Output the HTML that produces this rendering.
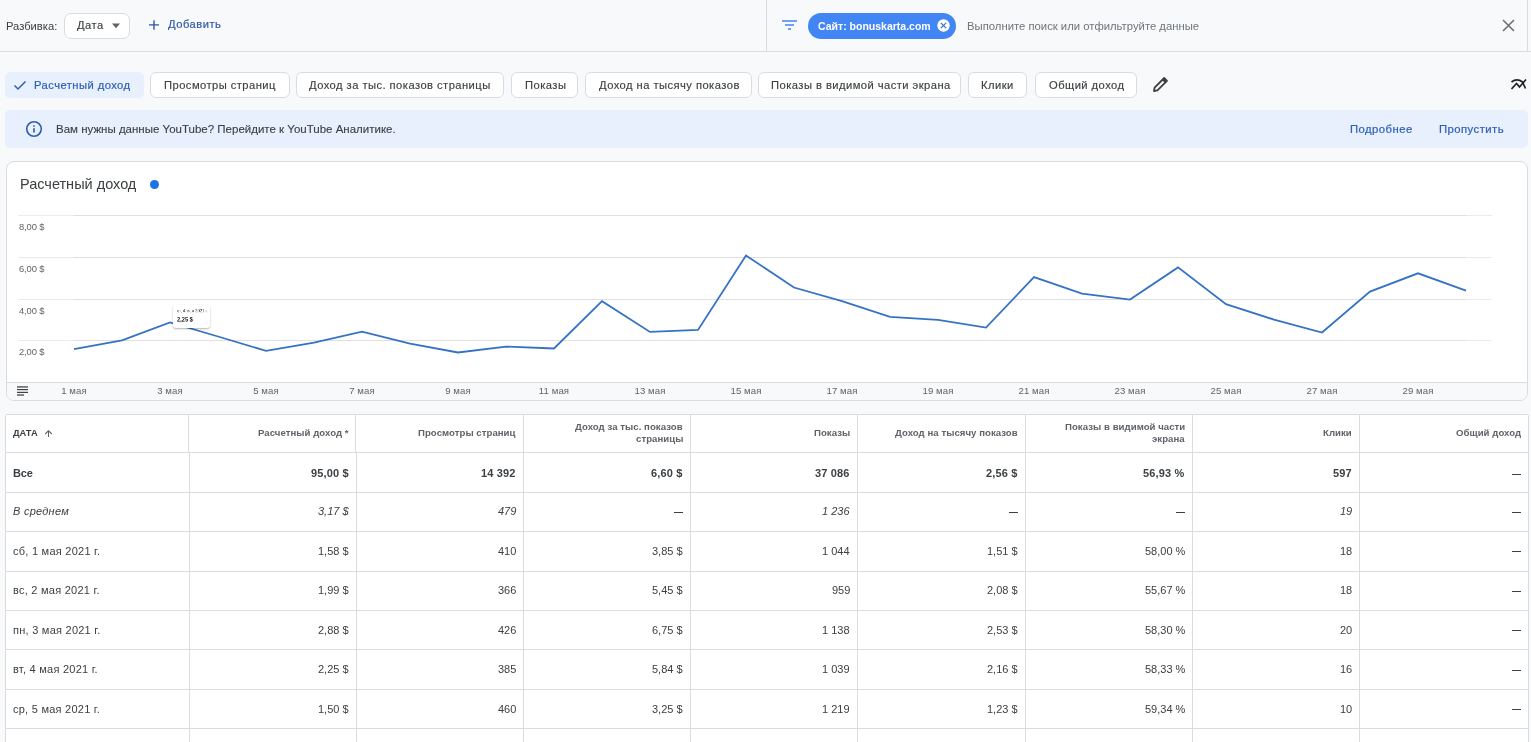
<!DOCTYPE html>
<html><head><meta charset="utf-8"><style>
html,body{margin:0;padding:0;}
body{width:1531px;height:742px;overflow:hidden;background:#f8f9fa;position:relative;font-family:"Liberation Sans", sans-serif;}
.t{position:absolute;line-height:1;white-space:nowrap;will-change:transform;}
.r{position:absolute;}
svg.r{overflow:visible;}
</style></head><body>
<div class="r" style="left:0.00px;top:51.00px;width:1531.00px;height:1.00px;background:#dadce0"></div>
<div class="r" style="left:766.00px;top:0.00px;width:1.00px;height:51.00px;background:#dadce0"></div>
<div class="r" style="left:1527.00px;top:0.00px;width:1.00px;height:51.00px;background:#dadce0"></div>
<div class="t" style="top:20.82px;font-size:11.2px;font-weight:400;color:#3c4043;left:6.00px;">Разбивка:</div>
<div class="r" style="left:64.00px;top:13.00px;width:66.00px;height:26.00px;background:#fff;border:1px solid #dadce0;border-radius:7px;box-sizing:border-box"></div>
<div class="t" style="top:20.12px;font-size:11.2px;font-weight:400;color:#3c4043;letter-spacing:0.45px;-webkit-text-stroke:0.15px #3c4043;left:77.00px;">Дата</div>
<svg class="r" style="left:111px;top:23px" width="10" height="6" viewBox="0 0 10 6"><path d="M1 0.5 L9 0.5 L5 5.2 Z" fill="#5f6368"/></svg>
<svg class="r" style="left:148px;top:19px" width="12" height="12" viewBox="0 0 12 12"><path d="M6 1.2 V10.8 M1 5.9 H11" stroke="#2f55a8" stroke-width="1.4"/></svg>
<div class="t" style="top:19.22px;font-size:11.2px;font-weight:400;color:#3159aa;letter-spacing:0.5px;-webkit-text-stroke:0.2px #3159aa;left:167.60px;">Добавить</div>
<svg class="r" style="left:781px;top:19px" width="17" height="12" viewBox="0 0 17 12"><path d="M1 2 H16 M4 6 H13 M7 10 H10" stroke="#4285f4" stroke-width="1.6"/></svg>
<div class="r" style="left:808.00px;top:13.00px;width:148.00px;height:26.00px;background:#4285f4;border-radius:13px"></div>
<div class="t" style="top:21.41px;font-size:10.5px;font-weight:700;color:#fff;left:818.00px;">Сайт: bonuskarta.com</div>
<svg class="r" style="left:936.5px;top:19px" width="13" height="13" viewBox="0 0 13 13"><circle cx="6.5" cy="6.5" r="6.2" fill="#fff"/><path d="M3.8 3.8 L9.2 9.2 M9.2 3.8 L3.8 9.2" stroke="#3b6fc9" stroke-width="1.2"/></svg>
<div class="t" style="top:20.83px;font-size:11.3px;font-weight:400;color:#70757a;left:966.50px;">Выполните поиск или отфильтруйте данные</div>
<svg class="r" style="left:1502px;top:19px" width="13" height="13" viewBox="0 0 13 13"><path d="M1 1 L12 12 M12 1 L1 12" stroke="#6f6f6f" stroke-width="1.6"/></svg>
<div class="r" style="left:5.00px;top:72.00px;width:139.00px;height:26.00px;background:#e8f0fe;border-radius:5px"></div>
<div class="t" style="top:79.52px;font-size:11.2px;font-weight:400;color:#2d5fb3;letter-spacing:0.45px;-webkit-text-stroke:0.2px #2d5fb3;left:34.00px;">Расчетный доход</div>
<svg class="r" style="left:13px;top:78px" width="14" height="14" viewBox="0 0 14 14"><path d="M1.5 7.5 L5 11 L12.5 3.5" stroke="#2d5fb3" stroke-width="1.5" fill="none"/></svg>
<div class="r" style="left:150.00px;top:72.00px;width:140.00px;height:26.00px;background:#fff;border:1px solid #dadce0;border-radius:6px;box-sizing:border-box"></div>
<div class="t" style="top:79.52px;font-size:11.2px;font-weight:400;color:#3c4043;letter-spacing:0.45px;-webkit-text-stroke:0.15px #3c4043;left:163.50px;">Просмотры страниц</div>
<div class="r" style="left:296.00px;top:72.00px;width:208.00px;height:26.00px;background:#fff;border:1px solid #dadce0;border-radius:6px;box-sizing:border-box"></div>
<div class="t" style="top:79.52px;font-size:11.2px;font-weight:400;color:#3c4043;letter-spacing:0.45px;-webkit-text-stroke:0.15px #3c4043;left:309.00px;">Доход за тыс. показов страницы</div>
<div class="r" style="left:511.00px;top:72.00px;width:67.00px;height:26.00px;background:#fff;border:1px solid #dadce0;border-radius:6px;box-sizing:border-box"></div>
<div class="t" style="top:79.52px;font-size:11.2px;font-weight:400;color:#3c4043;letter-spacing:0.45px;-webkit-text-stroke:0.15px #3c4043;left:524.50px;">Показы</div>
<div class="r" style="left:585.00px;top:72.00px;width:167.00px;height:26.00px;background:#fff;border:1px solid #dadce0;border-radius:6px;box-sizing:border-box"></div>
<div class="t" style="top:79.52px;font-size:11.2px;font-weight:400;color:#3c4043;letter-spacing:0.45px;-webkit-text-stroke:0.15px #3c4043;left:598.50px;">Доход на тысячу показов</div>
<div class="r" style="left:758.00px;top:72.00px;width:203.00px;height:26.00px;background:#fff;border:1px solid #dadce0;border-radius:6px;box-sizing:border-box"></div>
<div class="t" style="top:79.52px;font-size:11.2px;font-weight:400;color:#3c4043;letter-spacing:0.45px;-webkit-text-stroke:0.15px #3c4043;left:771.00px;">Показы в видимой части экрана</div>
<div class="r" style="left:968.00px;top:72.00px;width:59.00px;height:26.00px;background:#fff;border:1px solid #dadce0;border-radius:6px;box-sizing:border-box"></div>
<div class="t" style="top:79.52px;font-size:11.2px;font-weight:400;color:#3c4043;letter-spacing:0.45px;-webkit-text-stroke:0.15px #3c4043;left:981.00px;">Клики</div>
<div class="r" style="left:1035.00px;top:72.00px;width:102.00px;height:26.00px;background:#fff;border:1px solid #dadce0;border-radius:6px;box-sizing:border-box"></div>
<div class="t" style="top:79.52px;font-size:11.2px;font-weight:400;color:#3c4043;letter-spacing:0.45px;-webkit-text-stroke:0.15px #3c4043;left:1048.50px;">Общий доход</div>
<svg class="r" style="left:1151px;top:75px" width="19" height="19" viewBox="0 0 19 19"><path d="M3 16 L3.6 12.6 L13.2 3 L16 5.8 L6.4 15.4 Z" fill="none" stroke="#3c4043" stroke-width="1.8" stroke-linejoin="round"/><path d="M12 4.2 L14.8 7" stroke="#3c4043" stroke-width="2.6"/></svg>
<svg class="r" style="left:1509px;top:76px" width="20" height="16" viewBox="0 0 20 16"><path d="M2.5 13 L7.5 7.5 L10.5 11 L17 3.5" stroke="#202124" stroke-width="1.7" fill="none"/><path d="M2.5 6 Q8 1.6 13.5 6 L16.5 12.5" stroke="#202124" stroke-width="1.7" fill="none"/></svg>
<div class="r" style="left:5.00px;top:110.00px;width:1523.00px;height:38.00px;background:#e8f0fe;border-radius:5px"></div>
<svg class="r" style="left:25.2px;top:120.4px" width="18" height="18" viewBox="0 0 18 18"><circle cx="9" cy="9" r="7.3" fill="none" stroke="#2a5db2" stroke-width="1.6"/><rect x="8.2" y="8.2" width="1.6" height="4.3" fill="#2a5db2"/><rect x="8.2" y="5.3" width="1.6" height="1.5" fill="#2a5db2"/></svg>
<div class="t" style="top:124.07px;font-size:11.5px;font-weight:400;color:#3c4043;-webkit-text-stroke:0.12px #3c4043;left:56.40px;">Вам нужны данные YouTube? Перейдите к YouTube Аналитике.</div>
<div class="t" style="top:124.13px;font-size:11.3px;font-weight:400;color:#2d62b8;letter-spacing:0.45px;-webkit-text-stroke:0.22px #2d62b8;left:1349.60px;">Подробнее</div>
<div class="t" style="top:124.13px;font-size:11.3px;font-weight:400;color:#2d62b8;letter-spacing:0.45px;-webkit-text-stroke:0.22px #2d62b8;left:1438.60px;">Пропустить</div>
<div class="r" style="left:6.00px;top:161.00px;width:1522.00px;height:240.00px;background:#fff;border:1px solid #dadce0;border-radius:8px;box-sizing:border-box;overflow:hidden"></div>
<div class="r" style="left:7.00px;top:382.00px;width:1520.00px;height:18.00px;background:#f8f9fa;border-top:1px solid #dadce0;box-sizing:border-box;border-radius:0 0 7px 7px"></div>
<div class="t" style="top:176.73px;font-size:14.5px;font-weight:400;color:#3c4043;left:20.00px;">Расчетный доход</div>
<div class="r" style="left:150.00px;top:180.00px;width:9.00px;height:9.00px;background:#1a73e8;border-radius:50%"></div>
<div class="r" style="left:18.00px;top:215.00px;width:56.00px;height:1.00px;background:#ebebeb"></div>
<div class="r" style="left:74.00px;top:215.00px;width:1392.00px;height:1.00px;background:#e0e0e0"></div>
<div class="r" style="left:1466.00px;top:215.00px;width:26.00px;height:1.00px;background:#ebebeb"></div>
<div class="t" style="top:222.34px;font-size:9.4px;font-weight:400;color:#5f6368;letter-spacing:-0.1px;left:18.50px;">8,00 $</div>
<div class="r" style="left:18.00px;top:257.00px;width:56.00px;height:1.00px;background:#ebebeb"></div>
<div class="r" style="left:74.00px;top:257.00px;width:1392.00px;height:1.00px;background:#e0e0e0"></div>
<div class="r" style="left:1466.00px;top:257.00px;width:26.00px;height:1.00px;background:#ebebeb"></div>
<div class="t" style="top:264.34px;font-size:9.4px;font-weight:400;color:#5f6368;letter-spacing:-0.1px;left:18.50px;">6,00 $</div>
<div class="r" style="left:18.00px;top:298.50px;width:56.00px;height:1.00px;background:#ebebeb"></div>
<div class="r" style="left:74.00px;top:298.50px;width:1392.00px;height:1.00px;background:#e0e0e0"></div>
<div class="r" style="left:1466.00px;top:298.50px;width:26.00px;height:1.00px;background:#ebebeb"></div>
<div class="t" style="top:305.84px;font-size:9.4px;font-weight:400;color:#5f6368;letter-spacing:-0.1px;left:18.50px;">4,00 $</div>
<div class="r" style="left:18.00px;top:340.00px;width:56.00px;height:1.00px;background:#ebebeb"></div>
<div class="r" style="left:74.00px;top:340.00px;width:1392.00px;height:1.00px;background:#e0e0e0"></div>
<div class="r" style="left:1466.00px;top:340.00px;width:26.00px;height:1.00px;background:#ebebeb"></div>
<div class="t" style="top:347.34px;font-size:9.4px;font-weight:400;color:#5f6368;letter-spacing:-0.1px;left:18.50px;">2,00 $</div>
<svg class="r" style="left:0;top:0" width="1531" height="742"><polyline points="74,349.2 122,340.4 170,322.5 218,336.5 266,350.9 314,342.7 362,331.6 410,343.7 458,352.5 506,346.6 554,348.5 602,301.2 650,331.9 698,329.9 746,255.5 794,287.5 842,301.2 890,316.9 938,319.8 986,327.6 1034,277.1 1082,293.7 1130,299.6 1178,267.4 1226,304.1 1274,319.6 1322,332.5 1370,291.6 1418,273.3 1466,290.6" fill="none" stroke="#3572c4" stroke-width="1.8" stroke-linejoin="miter"/></svg>
<svg class="r" style="left:0;top:0" width="40" height="400"><g fill="#3c4043"><rect x="17" y="386.3" width="11" height="1.25"/><rect x="17" y="389" width="11" height="1.2"/><rect x="17" y="391.8" width="11" height="1.2"/><rect x="17" y="394.4" width="7" height="1.25"/></g></svg>
<div class="t" style="top:386.17px;font-size:9.6px;font-weight:400;color:#5f6368;letter-spacing:0.1px;left:-126.00px;width:400px;text-align:center;">1 мая</div>
<div class="t" style="top:386.17px;font-size:9.6px;font-weight:400;color:#5f6368;letter-spacing:0.1px;left:-30.00px;width:400px;text-align:center;">3 мая</div>
<div class="t" style="top:386.17px;font-size:9.6px;font-weight:400;color:#5f6368;letter-spacing:0.1px;left:66.00px;width:400px;text-align:center;">5 мая</div>
<div class="t" style="top:386.17px;font-size:9.6px;font-weight:400;color:#5f6368;letter-spacing:0.1px;left:162.00px;width:400px;text-align:center;">7 мая</div>
<div class="t" style="top:386.17px;font-size:9.6px;font-weight:400;color:#5f6368;letter-spacing:0.1px;left:258.00px;width:400px;text-align:center;">9 мая</div>
<div class="t" style="top:386.17px;font-size:9.6px;font-weight:400;color:#5f6368;letter-spacing:0.1px;left:354.00px;width:400px;text-align:center;">11 мая</div>
<div class="t" style="top:386.17px;font-size:9.6px;font-weight:400;color:#5f6368;letter-spacing:0.1px;left:450.00px;width:400px;text-align:center;">13 мая</div>
<div class="t" style="top:386.17px;font-size:9.6px;font-weight:400;color:#5f6368;letter-spacing:0.1px;left:546.00px;width:400px;text-align:center;">15 мая</div>
<div class="t" style="top:386.17px;font-size:9.6px;font-weight:400;color:#5f6368;letter-spacing:0.1px;left:642.00px;width:400px;text-align:center;">17 мая</div>
<div class="t" style="top:386.17px;font-size:9.6px;font-weight:400;color:#5f6368;letter-spacing:0.1px;left:738.00px;width:400px;text-align:center;">19 мая</div>
<div class="t" style="top:386.17px;font-size:9.6px;font-weight:400;color:#5f6368;letter-spacing:0.1px;left:834.00px;width:400px;text-align:center;">21 мая</div>
<div class="t" style="top:386.17px;font-size:9.6px;font-weight:400;color:#5f6368;letter-spacing:0.1px;left:930.00px;width:400px;text-align:center;">23 мая</div>
<div class="t" style="top:386.17px;font-size:9.6px;font-weight:400;color:#5f6368;letter-spacing:0.1px;left:1026.00px;width:400px;text-align:center;">25 мая</div>
<div class="t" style="top:386.17px;font-size:9.6px;font-weight:400;color:#5f6368;letter-spacing:0.1px;left:1122.00px;width:400px;text-align:center;">27 мая</div>
<div class="t" style="top:386.17px;font-size:9.6px;font-weight:400;color:#5f6368;letter-spacing:0.1px;left:1218.00px;width:400px;text-align:center;">29 мая</div>
<div class="r" style="left:173.00px;top:304.50px;width:37.00px;height:23.50px;background:#fff;border-radius:3px;box-shadow:0 1px 2px rgba(0,0,0,0.3)"></div>
<div class="t" style="left:177px;top:309px;font-size:10px;color:#3c4043;transform:scale(0.42);transform-origin:0 0;">вт, 4 мая 2021 г.</div>
<div class="t" style="left:177px;top:316.5px;font-size:10px;font-weight:700;color:#202124;transform:scale(0.57);transform-origin:0 0;">2,25 $</div>
<div class="r" style="left:5.00px;top:414.00px;width:1524.00px;height:346.00px;background:#fff;border:1px solid #dadce0;box-sizing:border-box;border-radius:2px 2px 0 0"></div>
<div class="r" style="left:5.00px;top:452.00px;width:1524.00px;height:1.00px;background:#dadce0"></div>
<div class="r" style="left:5.00px;top:492.00px;width:1524.00px;height:1.00px;background:#dadce0"></div>
<div class="r" style="left:5.00px;top:531.00px;width:1524.00px;height:1.00px;background:#dadce0"></div>
<div class="r" style="left:5.00px;top:571.00px;width:1524.00px;height:1.00px;background:#dadce0"></div>
<div class="r" style="left:5.00px;top:610.00px;width:1524.00px;height:1.00px;background:#dadce0"></div>
<div class="r" style="left:5.00px;top:649.00px;width:1524.00px;height:1.00px;background:#dadce0"></div>
<div class="r" style="left:5.00px;top:689.00px;width:1524.00px;height:1.00px;background:#dadce0"></div>
<div class="r" style="left:5.00px;top:728.00px;width:1524.00px;height:1.00px;background:#dadce0"></div>
<div class="r" style="left:188.00px;top:414.00px;width:1.00px;height:38.00px;background:#dadce0"></div>
<div class="r" style="left:189.00px;top:452.00px;width:1.00px;height:308.00px;background:#dadce0"></div>
<div class="r" style="left:355.00px;top:414.00px;width:1.00px;height:38.00px;background:#dadce0"></div>
<div class="r" style="left:356.00px;top:452.00px;width:1.00px;height:308.00px;background:#dadce0"></div>
<div class="r" style="left:523.00px;top:414.00px;width:1.00px;height:38.00px;background:#dadce0"></div>
<div class="r" style="left:523.00px;top:452.00px;width:1.00px;height:308.00px;background:#dadce0"></div>
<div class="r" style="left:690.00px;top:414.00px;width:1.00px;height:38.00px;background:#dadce0"></div>
<div class="r" style="left:690.00px;top:452.00px;width:1.00px;height:308.00px;background:#dadce0"></div>
<div class="r" style="left:857.00px;top:414.00px;width:1.00px;height:38.00px;background:#dadce0"></div>
<div class="r" style="left:857.00px;top:452.00px;width:1.00px;height:308.00px;background:#dadce0"></div>
<div class="r" style="left:1025.00px;top:414.00px;width:1.00px;height:38.00px;background:#dadce0"></div>
<div class="r" style="left:1025.00px;top:452.00px;width:1.00px;height:308.00px;background:#dadce0"></div>
<div class="r" style="left:1192.00px;top:414.00px;width:1.00px;height:38.00px;background:#dadce0"></div>
<div class="r" style="left:1192.00px;top:452.00px;width:1.00px;height:308.00px;background:#dadce0"></div>
<div class="r" style="left:1359.00px;top:414.00px;width:1.00px;height:38.00px;background:#dadce0"></div>
<div class="r" style="left:1359.00px;top:452.00px;width:1.00px;height:308.00px;background:#dadce0"></div>
<div class="t" style="top:429.13px;font-size:9.3px;font-weight:700;color:#3c4043;letter-spacing:0px;left:12.70px;">ДАТА</div>
<svg class="r" style="left:43.5px;top:429.8px" width="9" height="7" viewBox="0 0 9 7"><path d="M4.5 7 V0.8 M1.2 4 L4.5 0.7 L7.8 4" stroke="#5f6368" stroke-width="1.1" fill="none"/></svg>
<div class="t" style="top:428.47px;font-size:9.6px;font-weight:700;color:#5f6368;letter-spacing:0.05px;right:1182.00px;">Расчетный доход *</div>
<div class="t" style="top:428.47px;font-size:9.6px;font-weight:700;color:#5f6368;letter-spacing:0.05px;right:1015.00px;">Просмотры страниц</div>
<div class="t" style="top:422.37px;font-size:9.6px;font-weight:700;color:#5f6368;letter-spacing:0.05px;right:848.00px;">Доход за тыс. показов</div>
<div class="t" style="top:434.37px;font-size:9.6px;font-weight:700;color:#5f6368;letter-spacing:0.05px;right:848.00px;">страницы</div>
<div class="t" style="top:428.47px;font-size:9.6px;font-weight:700;color:#5f6368;letter-spacing:0.05px;right:681.00px;">Показы</div>
<div class="t" style="top:428.47px;font-size:9.6px;font-weight:700;color:#5f6368;letter-spacing:0.05px;right:513.00px;">Доход на тысячу показов</div>
<div class="t" style="top:422.37px;font-size:9.6px;font-weight:700;color:#5f6368;letter-spacing:0.05px;right:346.00px;">Показы в видимой части</div>
<div class="t" style="top:434.37px;font-size:9.6px;font-weight:700;color:#5f6368;letter-spacing:0.05px;right:346.00px;">экрана</div>
<div class="t" style="top:428.47px;font-size:9.6px;font-weight:700;color:#5f6368;letter-spacing:0.05px;right:179.00px;">Клики</div>
<div class="t" style="top:428.47px;font-size:9.6px;font-weight:700;color:#5f6368;letter-spacing:0.05px;right:10.00px;">Общий доход</div>
<div class="t" style="top:468.24px;font-size:11px;font-weight:700;color:#3c4043;letter-spacing:-0.1px;left:12.80px;">Все</div>
<div class="t" style="top:468.24px;font-size:11px;font-weight:700;color:#3c4043;letter-spacing:0.15px;right:1182.10px;">95,00 $</div>
<div class="t" style="top:468.24px;font-size:11px;font-weight:700;color:#3c4043;letter-spacing:0.15px;right:1015.10px;">14 392</div>
<div class="t" style="top:468.24px;font-size:11px;font-weight:700;color:#3c4043;letter-spacing:0.15px;right:848.10px;">6,60 $</div>
<div class="t" style="top:468.24px;font-size:11px;font-weight:700;color:#3c4043;letter-spacing:0.15px;right:681.10px;">37 086</div>
<div class="t" style="top:468.24px;font-size:11px;font-weight:700;color:#3c4043;letter-spacing:0.15px;right:513.10px;">2,56 $</div>
<div class="t" style="top:468.24px;font-size:11px;font-weight:700;color:#3c4043;letter-spacing:0.15px;right:346.10px;">56,93 %</div>
<div class="t" style="top:468.24px;font-size:11px;font-weight:700;color:#3c4043;letter-spacing:0.15px;right:179.10px;">597</div>
<div class="r" style="left:1512.30px;top:474.00px;width:8.30px;height:1.00px;background:#3c4043"></div>
<div class="t" style="top:506.47px;font-size:11px;font-weight:400;color:#3c4043;font-style:italic;letter-spacing:0.25px;left:12.80px;">В среднем</div>
<div class="t" style="top:506.47px;font-size:11px;font-weight:400;color:#3c4043;font-style:italic;letter-spacing:0px;right:1182.10px;">3,17 $</div>
<div class="t" style="top:506.47px;font-size:11px;font-weight:400;color:#3c4043;font-style:italic;letter-spacing:0px;right:1015.10px;">479</div>
<div class="r" style="left:674.30px;top:512.00px;width:8.30px;height:1.00px;background:#3c4043"></div>
<div class="t" style="top:506.47px;font-size:11px;font-weight:400;color:#3c4043;font-style:italic;letter-spacing:0px;right:681.10px;">1 236</div>
<div class="r" style="left:1009.30px;top:512.00px;width:8.30px;height:1.00px;background:#3c4043"></div>
<div class="r" style="left:1176.30px;top:512.00px;width:8.30px;height:1.00px;background:#3c4043"></div>
<div class="t" style="top:506.47px;font-size:11px;font-weight:400;color:#3c4043;font-style:italic;letter-spacing:0px;right:179.10px;">19</div>
<div class="r" style="left:1512.30px;top:512.00px;width:8.30px;height:1.00px;background:#3c4043"></div>
<div class="t" style="top:545.90px;font-size:11px;font-weight:400;color:#3c4043;letter-spacing:0.25px;left:12.80px;">сб, 1 мая 2021 г.</div>
<div class="t" style="top:545.90px;font-size:11px;font-weight:400;color:#3c4043;letter-spacing:0px;right:1182.10px;">1,58 $</div>
<div class="t" style="top:545.90px;font-size:11px;font-weight:400;color:#3c4043;letter-spacing:0px;right:1015.10px;">410</div>
<div class="t" style="top:545.90px;font-size:11px;font-weight:400;color:#3c4043;letter-spacing:0px;right:848.10px;">3,85 $</div>
<div class="t" style="top:545.90px;font-size:11px;font-weight:400;color:#3c4043;letter-spacing:0px;right:681.10px;">1 044</div>
<div class="t" style="top:545.90px;font-size:11px;font-weight:400;color:#3c4043;letter-spacing:0px;right:513.10px;">1,51 $</div>
<div class="t" style="top:545.90px;font-size:11px;font-weight:400;color:#3c4043;letter-spacing:0px;right:346.10px;">58,00 %</div>
<div class="t" style="top:545.90px;font-size:11px;font-weight:400;color:#3c4043;letter-spacing:0px;right:179.10px;">18</div>
<div class="r" style="left:1512.30px;top:551.00px;width:8.30px;height:1.00px;background:#3c4043"></div>
<div class="t" style="top:585.33px;font-size:11px;font-weight:400;color:#3c4043;letter-spacing:0.25px;left:12.80px;">вс, 2 мая 2021 г.</div>
<div class="t" style="top:585.33px;font-size:11px;font-weight:400;color:#3c4043;letter-spacing:0px;right:1182.10px;">1,99 $</div>
<div class="t" style="top:585.33px;font-size:11px;font-weight:400;color:#3c4043;letter-spacing:0px;right:1015.10px;">366</div>
<div class="t" style="top:585.33px;font-size:11px;font-weight:400;color:#3c4043;letter-spacing:0px;right:848.10px;">5,45 $</div>
<div class="t" style="top:585.33px;font-size:11px;font-weight:400;color:#3c4043;letter-spacing:0px;right:681.10px;">959</div>
<div class="t" style="top:585.33px;font-size:11px;font-weight:400;color:#3c4043;letter-spacing:0px;right:513.10px;">2,08 $</div>
<div class="t" style="top:585.33px;font-size:11px;font-weight:400;color:#3c4043;letter-spacing:0px;right:346.10px;">55,67 %</div>
<div class="t" style="top:585.33px;font-size:11px;font-weight:400;color:#3c4043;letter-spacing:0px;right:179.10px;">18</div>
<div class="r" style="left:1512.30px;top:591.00px;width:8.30px;height:1.00px;background:#3c4043"></div>
<div class="t" style="top:624.76px;font-size:11px;font-weight:400;color:#3c4043;letter-spacing:0.25px;left:12.80px;">пн, 3 мая 2021 г.</div>
<div class="t" style="top:624.76px;font-size:11px;font-weight:400;color:#3c4043;letter-spacing:0px;right:1182.10px;">2,88 $</div>
<div class="t" style="top:624.76px;font-size:11px;font-weight:400;color:#3c4043;letter-spacing:0px;right:1015.10px;">426</div>
<div class="t" style="top:624.76px;font-size:11px;font-weight:400;color:#3c4043;letter-spacing:0px;right:848.10px;">6,75 $</div>
<div class="t" style="top:624.76px;font-size:11px;font-weight:400;color:#3c4043;letter-spacing:0px;right:681.10px;">1 138</div>
<div class="t" style="top:624.76px;font-size:11px;font-weight:400;color:#3c4043;letter-spacing:0px;right:513.10px;">2,53 $</div>
<div class="t" style="top:624.76px;font-size:11px;font-weight:400;color:#3c4043;letter-spacing:0px;right:346.10px;">58,30 %</div>
<div class="t" style="top:624.76px;font-size:11px;font-weight:400;color:#3c4043;letter-spacing:0px;right:179.10px;">20</div>
<div class="r" style="left:1512.30px;top:630.00px;width:8.30px;height:1.00px;background:#3c4043"></div>
<div class="t" style="top:664.19px;font-size:11px;font-weight:400;color:#3c4043;letter-spacing:0.25px;left:12.80px;">вт, 4 мая 2021 г.</div>
<div class="t" style="top:664.19px;font-size:11px;font-weight:400;color:#3c4043;letter-spacing:0px;right:1182.10px;">2,25 $</div>
<div class="t" style="top:664.19px;font-size:11px;font-weight:400;color:#3c4043;letter-spacing:0px;right:1015.10px;">385</div>
<div class="t" style="top:664.19px;font-size:11px;font-weight:400;color:#3c4043;letter-spacing:0px;right:848.10px;">5,84 $</div>
<div class="t" style="top:664.19px;font-size:11px;font-weight:400;color:#3c4043;letter-spacing:0px;right:681.10px;">1 039</div>
<div class="t" style="top:664.19px;font-size:11px;font-weight:400;color:#3c4043;letter-spacing:0px;right:513.10px;">2,16 $</div>
<div class="t" style="top:664.19px;font-size:11px;font-weight:400;color:#3c4043;letter-spacing:0px;right:346.10px;">58,33 %</div>
<div class="t" style="top:664.19px;font-size:11px;font-weight:400;color:#3c4043;letter-spacing:0px;right:179.10px;">16</div>
<div class="r" style="left:1512.30px;top:670.00px;width:8.30px;height:1.00px;background:#3c4043"></div>
<div class="t" style="top:703.62px;font-size:11px;font-weight:400;color:#3c4043;letter-spacing:0.25px;left:12.80px;">ср, 5 мая 2021 г.</div>
<div class="t" style="top:703.62px;font-size:11px;font-weight:400;color:#3c4043;letter-spacing:0px;right:1182.10px;">1,50 $</div>
<div class="t" style="top:703.62px;font-size:11px;font-weight:400;color:#3c4043;letter-spacing:0px;right:1015.10px;">460</div>
<div class="t" style="top:703.62px;font-size:11px;font-weight:400;color:#3c4043;letter-spacing:0px;right:848.10px;">3,25 $</div>
<div class="t" style="top:703.62px;font-size:11px;font-weight:400;color:#3c4043;letter-spacing:0px;right:681.10px;">1 219</div>
<div class="t" style="top:703.62px;font-size:11px;font-weight:400;color:#3c4043;letter-spacing:0px;right:513.10px;">1,23 $</div>
<div class="t" style="top:703.62px;font-size:11px;font-weight:400;color:#3c4043;letter-spacing:0px;right:346.10px;">59,34 %</div>
<div class="t" style="top:703.62px;font-size:11px;font-weight:400;color:#3c4043;letter-spacing:0px;right:179.10px;">10</div>
<div class="r" style="left:1512.30px;top:709.00px;width:8.30px;height:1.00px;background:#3c4043"></div>
</body></html>
